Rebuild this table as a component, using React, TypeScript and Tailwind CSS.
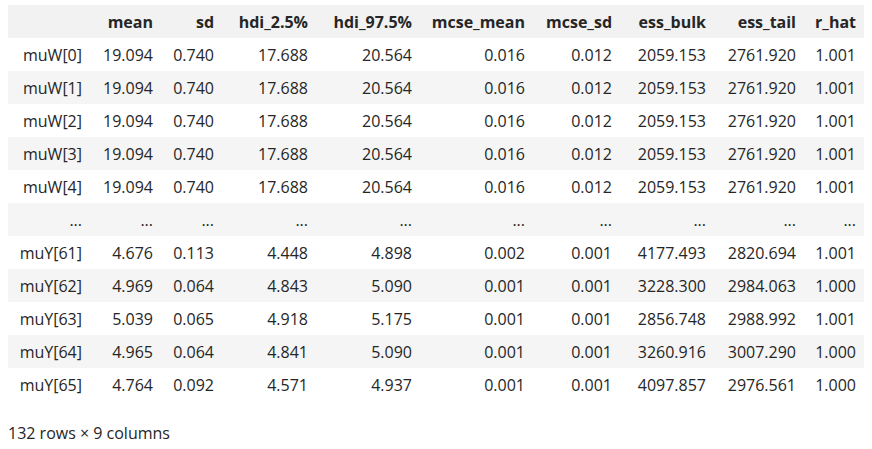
const columns = [
  "mean",
  "sd",
  "hdi_2.5%",
  "hdi_97.5%",
  "mcse_mean",
  "mcse_sd",
  "ess_bulk",
  "ess_tail",
  "r_hat",
];

// widths of each column, index first
const widths = [82, 71, 61, 94, 104, 113, 87, 94, 90, 60];

const muW = ["19.094", "0.740", "17.688", "20.564", "0.016", "0.012", "2059.153", "2761.920", "1.001"];

const rows: [string, string[]][] = [
  ["muW[0]", muW],
  ["muW[1]", muW],
  ["muW[2]", muW],
  ["muW[3]", muW],
  ["muW[4]", muW],
  ["...", Array(9).fill("...")],
  ["muY[61]", ["4.676", "0.113", "4.448", "4.898", "0.002", "0.001", "4177.493", "2820.694", "1.001"]],
  ["muY[62]", ["4.969", "0.064", "4.843", "5.090", "0.001", "0.001", "3228.300", "2984.063", "1.000"]],
  ["muY[63]", ["5.039", "0.065", "4.918", "5.175", "0.001", "0.001", "2856.748", "2988.992", "1.001"]],
  ["muY[64]", ["4.965", "0.064", "4.841", "5.090", "0.001", "0.001", "3260.916", "3007.290", "1.000"]],
  ["muY[65]", ["4.764", "0.092", "4.571", "4.937", "0.001", "0.001", "4097.857", "2976.561", "1.000"]],
];

export default function App() {
  return (
    <div className="min-h-screen bg-white pl-2 pt-[5px] font-['Open_Sans',sans-serif] text-[16px] text-[#262626]">
      <table className="border-collapse table-fixed w-[856px]">
        <colgroup>
          {widths.map((w, i) => (
            <col key={i} style={{ width: w }} />
          ))}
        </colgroup>
        <thead>
          <tr className="h-[33px] bg-[#f2f2f2]">
            <th />
            {columns.map((c) => (
              <th key={c} className="pr-2 text-right font-bold">
                {c}
              </th>
            ))}
          </tr>
        </thead>
        <tbody>
          {rows.map(([name, vals], i) => (
            <tr key={name} className={i % 2 === 1 ? "h-[33px] bg-[#f5f5f5]" : "h-[33px] bg-white"}>
              <td className="pr-2 text-right">{name}</td>
              {vals.map((v, j) => (
                <td key={j} className="pr-2 text-right">
                  {v}
                </td>
              ))}
            </tr>
          ))}
        </tbody>
      </table>
      <div className="mt-5 text-[16px]">132 rows × 9 columns</div>
    </div>
  );
}
